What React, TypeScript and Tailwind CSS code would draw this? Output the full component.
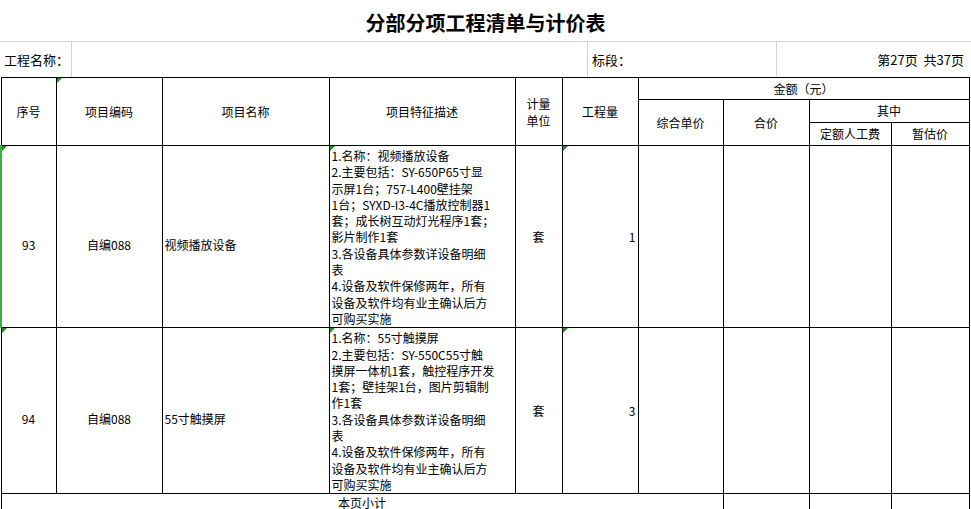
const cols = [55, 106, 167, 186, 47, 76, 85, 86, 82, 78]

const rows = [
  {
    no: "93",
    code: "自编088",
    name: "视频播放设备",
    h: 180,
    qty: "1",
    desc: [
      "1.名称：视频播放设备",
      "2.主要包括：SY-650P65寸显",
      "示屏1台；757-L400壁挂架",
      "1台；SYXD-I3-4C播放控制器1",
      "套；成长树互动灯光程序1套；",
      "影片制作1套",
      "3.各设备具体参数详设备明细",
      "表",
      "4.设备及软件保修两年，所有",
      "设备及软件均有业主确认后方",
      "可购买实施",
    ],
  },
  {
    no: "94",
    code: "自编088",
    name: "55寸触摸屏",
    h: 162,
    qty: "3",
    desc: [
      "1.名称：55寸触摸屏",
      "2.主要包括：SY-550C55寸触",
      "摸屏一体机1套，触控程序开发",
      "1套；壁挂架1台，图片剪辑制",
      "作1套",
      "3.各设备具体参数详设备明细",
      "表",
      "4.设备及软件保修两年，所有",
      "设备及软件均有业主确认后方",
      "可购买实施",
    ],
  },
]

const Tri = () => (
  <span className="absolute left-0 top-0 h-0 w-0 border-r-[5px] border-t-[5px] border-r-transparent border-t-[#1e8e1e]" />
)

export default function App() {
  const td = "border border-black p-0 align-middle"
  return (
    <div
      className="h-[509px] w-[971px] overflow-hidden bg-white text-[12px] text-black"
      style={{ fontFamily: '"Noto Sans CJK SC", "Liberation Sans", sans-serif' }}
    >
      <div className="flex h-[42px] items-center justify-center border-b border-[#d4d4d4] pt-1 text-[20px] font-bold">
        分部分项工程清单与计价表
      </div>
      <div className="flex h-[35px] items-center text-[13px]">
        <div className="flex h-full w-[72px] items-center border-r border-[#d4d4d4] pl-1">工程名称：</div>
        <div className="h-full w-[516px] border-r border-[#d4d4d4]" />
        <div className="flex h-full w-[189px] items-center border-r border-[#d4d4d4] pl-1">标段：</div>
        <div className="flex h-full w-[191px] items-center justify-end pr-1">第27页&nbsp;&nbsp;共37页</div>
      </div>
      <table className="table-fixed border-collapse" style={{ width: 968 }}>
        <colgroup>
          {cols.map((w, i) => (
            <col key={i} style={{ width: w }} />
          ))}
        </colgroup>
        <tbody className="text-center">
          <tr className="h-[22px]">
            <td rowSpan={3} className={td}>序号</td>
            <td rowSpan={3} className={`${td} relative`}><Tri />项目编码</td>
            <td rowSpan={3} className={td}>项目名称</td>
            <td rowSpan={3} className={td}>项目特征描述</td>
            <td rowSpan={3} className={td}>
              <div className="leading-[17px]">计量</div>
              <div className="leading-[17px]">单位</div>
            </td>
            <td rowSpan={3} className={td}>工程量</td>
            <td colSpan={4} className={td}>金额（元）</td>
          </tr>
          <tr className="h-[23px]">
            <td rowSpan={2} className={td}>综合单价</td>
            <td rowSpan={2} className={td}>合价</td>
            <td colSpan={2} className={td}>其中</td>
          </tr>
          <tr className="h-[23px]">
            <td className={td}>定额人工费</td>
            <td className={td}>暂估价</td>
          </tr>
          {rows.map((r, idx) => (
            <tr key={r.no} style={{ height: r.h }}>
              <td className={`${td} relative ${idx === 0 ? "border-l-2 border-l-[#3fae3f]" : ""}`}>
                <Tri />
                <div className="pt-4">{r.no}</div>
              </td>
              <td className={td}><div className="pt-4">{r.code}</div></td>
              <td className={`${td} text-left`}><div className="pl-0.5 pt-4">{r.name}</div></td>
              <td className={`${td} relative text-left align-top`}>
                <Tri />
                <div className="overflow-hidden whitespace-nowrap pl-0.5 pt-0.5 leading-[16.3px]">
                  {r.desc.map((d) => (
                    <div key={d}>{d}</div>
                  ))}
                </div>
              </td>
              <td className={td}>套</td>
              <td className={`${td} relative text-right`}><Tri /><div className="pr-0.5">{r.qty}</div></td>
              <td className={td} />
              <td className={td} />
              <td className={td} />
              <td className={td} />
            </tr>
          ))}
          <tr className="h-[19px]">
            <td colSpan={7} className={td}>本页小计</td>
            <td className={td} />
            <td className={td} />
            <td className={td} />
          </tr>
        </tbody>
      </table>
    </div>
  )
}
